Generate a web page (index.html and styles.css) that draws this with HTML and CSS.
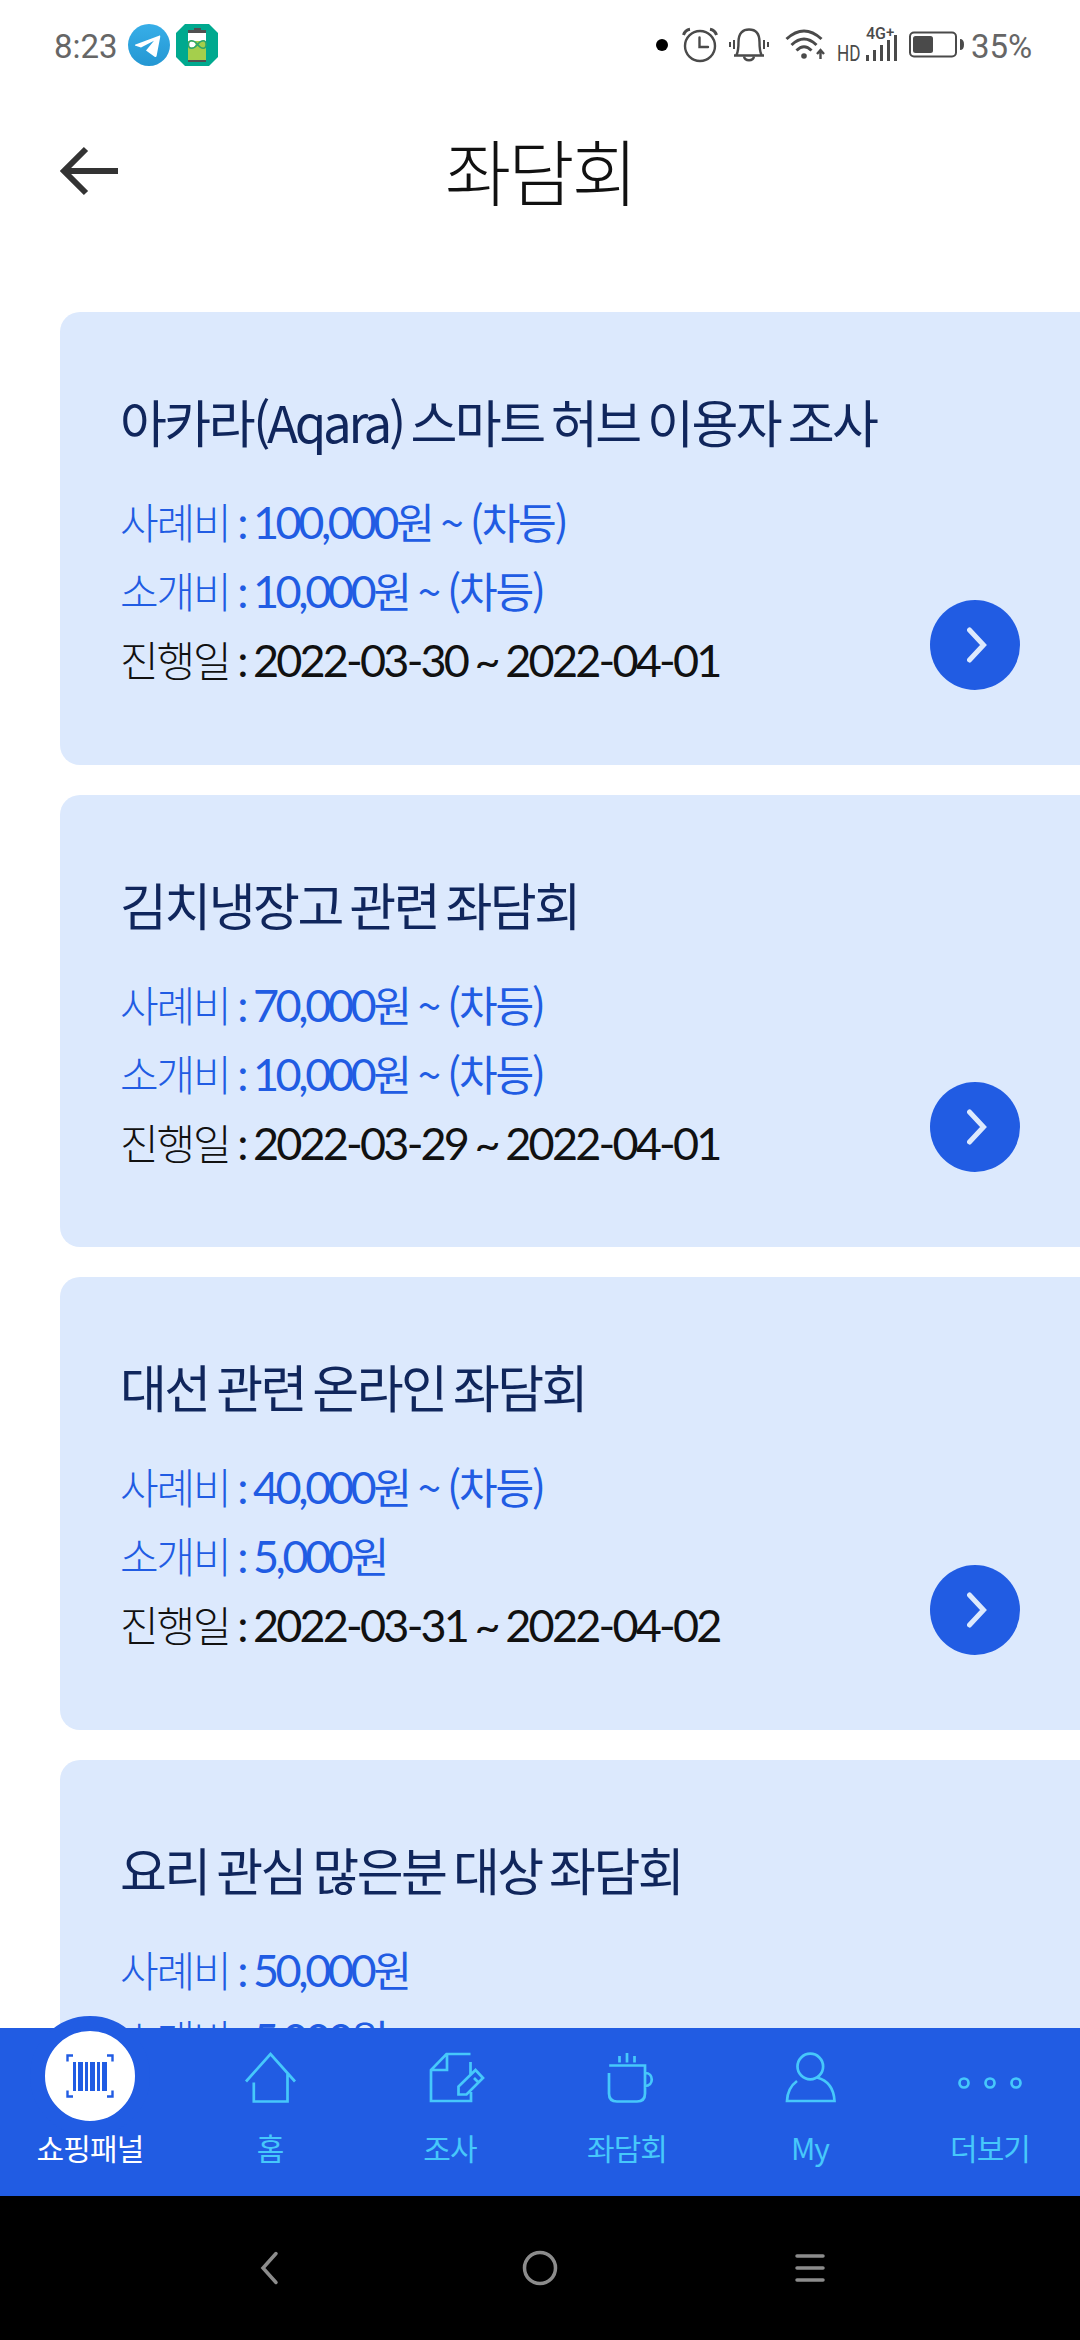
FILE: index.html
```html
<!DOCTYPE html>
<html lang="ko">
<head>
    <meta charset="UTF-8">
    <meta name="viewport" content="width=device-width, initial-scale=1.0">
    <title>좌담회</title>
    <link rel="stylesheet" href="styles.css">
</head>
<body>
    <div class="status">
        <div class="status-left">
            <span class="clock">8:23</span>
            <svg class="app-icon" width="42" height="42" viewBox="0 0 42 42">
                <defs>
                    <linearGradient id="tg" x1="0" y1="0" x2="0" y2="1">
                        <stop offset="0" stop-color="#37aee8"/>
                        <stop offset="1" stop-color="#2497d3"/>
                    </linearGradient>
                </defs>
                <circle cx="21" cy="21" r="21" fill="url(#tg)"/>
                <path d="M7.5 20.5 31 11.7c1-.3 1.4.2 1.2 1.2L28.6 32c-.3 1.2-1.1 1.3-2 .7L18 26.500l8-9.800L13 23.500 7.500 21.700c-.8-.4-.8-.9 0-1.200Z" fill="#fff"/>
            </svg>
            <svg class="app-icon" width="42" height="42" viewBox="0 0 42 42">
                <path d="M9 0h24l9 9v24l-9 9H9l-9-9V9Z" fill="#00a98f"/>
                <rect x="12" y="8" width="18" height="10" fill="#fff"/>
                <rect x="12" y="17" width="18" height="19" fill="#a5cf4c"/>
                <path d="M18 4h7v2h5v3H12V6h6ZM12 36h18v2H12Z" fill="#505050"/>
                <ellipse cx="16" cy="20.500" rx="3.500" ry="3" fill="#fff"/>
                <path d="M12.500 20.500c0-5 5-5 9 0s8.500 5 8.500 0-4.500-5-8.500 0-9 5-9 0Z" fill="none" stroke="#2fa66a" stroke-width="1.500"/>
            </svg>
        </div>
        <div class="status-right">
            <span class="dot"></span>
            <svg class="ic-alarm" width="36" height="36" viewBox="0 0 36 36" fill="none" stroke="#4a4a4a" stroke-width="2.400">
                <circle cx="18" cy="19" r="15"/>
                <path d="M17.500 10.500v9.500h8.500" stroke-linecap="round"/>
                <path d="M1.500 8Q3 3 8 2.200M34.500 8Q33 3 28 2.200" stroke-width="3"/>
            </svg>
            <svg class="ic-bell" width="42" height="36" viewBox="0 0 42 36" fill="none" stroke="#4a4a4a" stroke-width="2.400">
                <path d="M6 28.500h30M8.500 28c2-4 2-7 2-13C10.500 6 15 2.500 21 2.500S31.500 6 31.500 15c0 6 0 9 2 13"/>
                <path d="M16 29.500c1 5 9 5 10 0"/>
                <path d="M6 13v9M2 15v5M36 13v9M40 15v5" stroke-width="2"/>
            </svg>
            <svg class="ic-wifi" width="40" height="34" viewBox="0 0 40 34" fill="none" stroke="#4a4a4a" stroke-width="3">
                <path d="M1.500 11Q19 -5 36.500 11M6.500 17Q19 5 31.500 17M11.500 22.500Q19 15 26.500 22.500"/>
                <circle cx="19" cy="28" r="2.800" fill="#4a4a4a" stroke="none"/>
                <path d="M35.500 22v9M32 26l3.500-4 3.500 4" stroke-width="2.400"/>
            </svg>
            <span class="hd">HD</span>
            <span class="signal">
                <span class="net">4G<sup>+</sup></span>
                <svg width="32" height="28" viewBox="0 0 32 28" fill="#4a4a4a">
                    <path d="M0 21h3v6H0ZM7 16h3v11H7ZM14 11h3v16h-3ZM21 6h3v21h-3ZM28 1h3v26h-3Z"/>
                </svg>
            </span>
            <svg class="ic-battery" width="56" height="28" viewBox="0 0 56 28">
                <rect x="1" y="1.500" width="46" height="24" rx="4" fill="none" stroke="#4a4a4a" stroke-width="2"/>
                <rect x="4" y="5" width="20" height="17" rx="2.500" fill="#4a4a4a"/>
                <path d="M51 8q4 0 4 5.500T51 19Z" fill="#4a4a4a"/>
            </svg>
            <span class="percent">35%</span>
        </div>
    </div>

    <header class="header">
        <svg class="back" width="60" height="50" viewBox="0 0 60 50" fill="none" stroke="#333" stroke-width="6">
            <path d="M58 25H5M26 3 4 25l22 22"/>
        </svg>
        <h1>좌담회</h1>
    </header>

    <main class="list">
        <section class="card">
            <h2>아카라<i>(Aqara)</i> 스마트 허브 이용자 조사</h2>
            <p class="fee"><span>사례비</span> : <b>100,000</b><em>원 ~ (차등)</em></p>
            <p class="fee"><span>소개비</span> : <b>10,000</b><em>원 ~ (차등)</em></p>
            <p><span>진행일</span> : <b class="date">2022-03-30 ~ 2022-04-01</b></p>
            <a class="go"><svg width="20" height="36" viewBox="0 0 20 36"><path d="M2.500 3 16.500 18 2.500 33"/></svg></a>
        </section>
        <section class="card">
            <h2>김치냉장고 관련 좌담회</h2>
            <p class="fee"><span>사례비</span> : <b>70,000</b><em>원 ~ (차등)</em></p>
            <p class="fee"><span>소개비</span> : <b>10,000</b><em>원 ~ (차등)</em></p>
            <p><span>진행일</span> : <b class="date">2022-03-29 ~ 2022-04-01</b></p>
            <a class="go"><svg width="20" height="36" viewBox="0 0 20 36"><path d="M2.500 3 16.500 18 2.500 33"/></svg></a>
        </section>
        <section class="card">
            <h2>대선 관련 온라인 좌담회</h2>
            <p class="fee"><span>사례비</span> : <b>40,000</b><em>원 ~ (차등)</em></p>
            <p class="fee"><span>소개비</span> : <b>5,000</b><em>원</em></p>
            <p><span>진행일</span> : <b class="date">2022-03-31 ~ 2022-04-02</b></p>
            <a class="go"><svg width="20" height="36" viewBox="0 0 20 36"><path d="M2.500 3 16.500 18 2.500 33"/></svg></a>
        </section>
        <section class="card">
            <h2>요리 관심 많은분 대상 좌담회</h2>
            <p class="fee"><span>사례비</span> : <b>50,000</b><em>원</em></p>
            <p class="fee"><span>소개비</span> : <b>5,000</b><em>원</em></p>
        </section>
    </main>

    <nav class="tabs">
        <a class="tab active">
            <span class="bubble">
                <svg width="48" height="44" viewBox="0 0 48 44">
                    <path d="M1.500 7.500v-6H7M41 1.500h5.500v6M1.500 36.500v6H7M41 42.500h5.500v-6" fill="none" stroke="#215ce3" stroke-width="2.400"/>
                    <path d="M7 8h3v29H7ZM12 8h5v29h-5ZM19 8h3v29h-3ZM24 8h5v29h-5ZM31 8h3v29h-3ZM36 8h5v29h-5Z" fill="#215ce3"/>
                </svg>
            </span>
            <span>쇼핑패널</span>
        </a>
        <a class="tab">
            <svg width="56" height="56" viewBox="0 0 56 56"><path d="M4 32.500 28.500 5 53 32.500M11.800 33.500v19h33.700V25"/></svg>
            <span>홈</span>
        </a>
        <a class="tab">
            <svg class="wide" width="56" height="56" viewBox="0 0 56 56"><path d="M43.500 5H19.500L4 21v31h40V43M43.500 13v13M4 21h16V5M31.500 45.500v-8L48.500 21l7.500 8-16.500 16.500ZM47 29l4 4"/></svg>
            <span>조사</span>
        </a>
        <a class="tab cup">
            <svg width="56" height="56" viewBox="0 0 56 56"><path d="M7.200 16.500H43v28q0 8-8 8H15q-8 0-8-8V24M43 24c9 0 9 13 0 13M17.500 7v6.500M25 4v9.500M32.500 7v6.500"/></svg>
            <span>좌담회</span>
        </a>
        <a class="tab">
            <svg width="56" height="56" viewBox="0 0 56 56"><circle cx="28.300" cy="17.500" r="12.800"/><path d="M15 32Q5.500 39 5 52h47.500Q51.500 33 35 28.500"/></svg>
            <span>My</span>
        </a>
        <a class="tab">
            <svg width="66" height="56" viewBox="0 0 66 56"><circle cx="7" cy="34" r="4.500"/><circle cx="33" cy="34" r="4.500"/><circle cx="59" cy="34" r="4.500"/></svg>
            <span>더보기</span>
        </a>
    </nav>

    <div class="sysnav">
        <svg width="40" height="40" viewBox="0 0 40 40"><path d="M26 5.500 13 20l13 14.500"/></svg>
        <svg width="40" height="40" viewBox="0 0 40 40"><circle cx="20" cy="20" r="15.500"/></svg>
        <svg width="40" height="40" viewBox="0 0 40 40"><path d="M7 8h26M7 20h26M7 32h26"/></svg>
    </div>
</body>
</html>
```
FILE: styles.css
```css
* {
    box-sizing: border-box;
}
body {
    margin: 0;
    height: 2340px;
    display: flex;
    flex-direction: column;
    overflow: hidden;
    background: #fff;
    color: #111;
    font-family: "Noto Sans CJK KR", sans-serif;
}
h1, h2, p {
    margin: 0;
}
i, em {
    font-style: normal;
}

/* status bar */
.status {
    height: 90px;
    padding: 0 48px 0 54px;
    display: flex;
    justify-content: space-between;
    align-items: center;
    font-family: Roboto, sans-serif;
    font-size: 33px;
    color: #666;
    flex-shrink: 0;
}
.status-left,
.status-right {
    display: flex;
    align-items: center;
}
.clock,
.percent {
    margin-top: 2px;
}
.app-icon {
    margin-right: 6px;
}
.clock {
    width: 74px;
}
.dot {
    width: 12px;
    height: 12px;
    border-radius: 50%;
    background: #000;
}
.ic-alarm {
    margin-left: 14px;
}
.ic-bell {
    margin-left: 10px;
}
.ic-wifi {
    margin-left: 15px;
}
.hd {
    width: 24px;
    margin: 17px 0 0 12px;
    font-size: 22px;
    color: #4a4a4a;
    transform: scaleX(0.78);
    transform-origin: left;
}
.signal {
    position: relative;
    width: 32px;
    height: 36px;
    margin-left: 5px;
}
.signal svg {
    display: block;
    margin-top: 7px;
}
.net {
    position: absolute;
    top: -1px;
    left: 0;
    font-size: 16px;
    line-height: 16px;
    font-weight: 500;
    color: #4a4a4a;
}
.net sup {
    line-height: 0;
    font-size: 15px;
    vertical-align: 2px;
}
.ic-battery {
    margin-left: 11px;
}
.percent {
    width: 61px;
    margin-left: 6px;
}

/* header */
.header {
    height: 222px;
    padding: 0 60px;
    display: grid;
    grid-template-columns: 60px 1fr 60px;
    flex-shrink: 0;
}
.back {
    margin-top: 56px;
}
.header h1 {
    margin-top: 27px;
    text-align: center;
    font-size: 72px;
    line-height: 104px;
    font-weight: 300;
    letter-spacing: -0.04em;
}

/* cards */
.list {
    flex: 1;
    min-height: 0;
    padding-left: 60px;
    overflow: hidden;
}
.card {
    position: relative;
    height: 452.67px;
    margin-bottom: 30px;
    padding: 72px 60px 0;
    background: #dce9fd;
    border-radius: 20px 0 0 20px;
    white-space: nowrap;
}
.card h2 {
    margin-bottom: 29px;
    font-size: 51px;
    line-height: 75px;
    font-weight: 400;
    letter-spacing: -0.05em;
    word-spacing: -4.3px;
    color: #10265c;
}
.card h2 i {
    letter-spacing: -3.3px;
}
/* latin digits run a bit larger than the hangul around them */
.card p {
    font-family: Lato, sans-serif;
    font-size: 45px;
    line-height: 69px;
    height: 69px;
    letter-spacing: -3px;
}
.card p span,
.card p em {
    font-family: "Noto Sans CJK KR", sans-serif;
    font-size: 42px;
    line-height: 0;
    letter-spacing: -2.2px;
    word-spacing: -1.5px;
}
.card p span {
    margin-right: -1px;
    font-weight: 300;
    letter-spacing: -2.1px;
}
.card p b {
    margin-left: -1px;
    font-weight: 400;
    letter-spacing: -3.4px;
}
.card p .date {
    letter-spacing: -2.8px;
    word-spacing: -1.3px;
}
.card .fee {
    color: #215ce3;
}
.go {
    position: absolute;
    right: 60px;
    bottom: 75px;
    width: 90px;
    height: 90px;
    padding-left: 4px;
    border-radius: 50%;
    background: #215ce3;
    display: flex;
    align-items: center;
    justify-content: center;
}
.go svg {
    fill: none;
    stroke: #dce9fd;
    stroke-width: 5;
    stroke-linecap: round;
}

/* bottom tabs */
.tabs {
    position: relative;
    height: 168px;
    flex-shrink: 0;
    display: grid;
    grid-template-columns: repeat(6, 1fr);
    background: #215ce3;
    color: #46c8fb;
    font-size: 30px;
    line-height: 44px;
    letter-spacing: -0.03em;
}
.tab {
    height: 168px;
    display: flex;
    flex-direction: column;
    align-items: center;
    justify-content: flex-end;
    padding-bottom: 27px;
}
.tab svg {
    flex-shrink: 0;
    margin-bottom: 20px;
    fill: none;
    stroke: #46c8fb;
    stroke-width: 2.7;
    overflow: visible;
}
.tab .wide {
    margin-left: 9px;
}
.cup span {
    margin-right: 6px;
}
.active {
    color: #fff;
}
.bubble {
    flex-shrink: 0;
    width: 120px;
    height: 120px;
    margin-bottom: -11px;
    border: 15px solid #215ce3;
    border-radius: 50%;
    background: #fff;
    display: flex;
    align-items: center;
    justify-content: center;
}
.tab .bubble svg {
    margin: 0;
    stroke: none;
}

/* android navigation */
.sysnav {
    height: 144px;
    padding: 0 135px;
    flex-shrink: 0;
    display: grid;
    grid-template-columns: repeat(3, 1fr);
    align-items: center;
    justify-items: center;
    background: #000;
}
.sysnav svg {
    fill: none;
    stroke: #8c8c8c;
    stroke-width: 3.5;
    stroke-linecap: round;
}
```
